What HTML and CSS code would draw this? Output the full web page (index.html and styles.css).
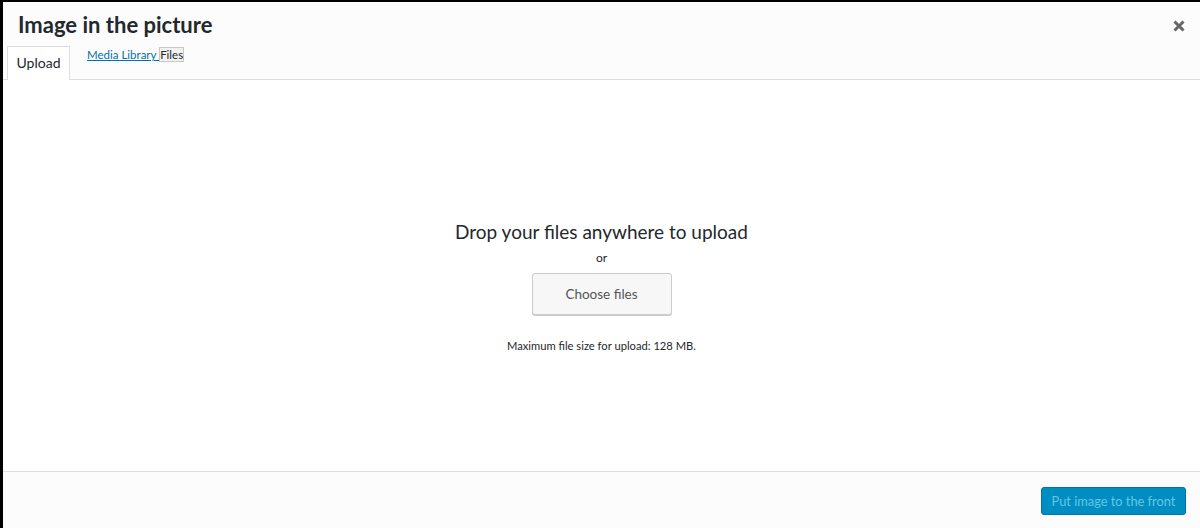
FILE: index.html
```html
<!DOCTYPE html>
<html lang="en">
<head>
<meta charset="utf-8">
<title>Image in the picture</title>
<link rel="stylesheet" href="styles.css">
</head>
<body>
<div class="modal">
  <header class="modal-header">
    <div class="title-row">
      <h1 class="title">Image in the picture</h1>
      <button class="close" aria-label="Close">
        <svg width="12" height="12" viewBox="0 0 12 12"><path d="M1.5 1.5 L10.5 10.5 M10.5 1.5 L1.5 10.5" stroke="#666" stroke-width="3" stroke-linecap="butt"/></svg>
      </button>
    </div>
    <nav class="tabs">
      <span class="tab active">Upload</span>
      <span class="tab-links"><a href="#" class="lib-link">Media Library&nbsp;</a><span class="files">Files</span></span>
    </nav>
  </header>
  <main class="content">
    <h2 class="drop-title">Drop your files anywhere to upload</h2>
    <p class="or">or</p>
    <button class="choose">Choose files</button>
    <p class="max">Maximum file size for upload: 128 MB.</p>
  </main>
  <footer class="modal-footer">
    <button class="primary">Put image to the front</button>
  </footer>
</div>
</body>
</html>
```
FILE: styles.css
```css
html, body {
  margin: 0;
  padding: 0;
  height: 100%;
  background: #000;
  overflow: hidden;
}
body {
  font-family: "Lato", "Open Sans", sans-serif;
  color: #23282d;
}
.modal {
  margin: 2px 0 0 3px;
  width: 1197px;
  height: 526px;
  display: flex;
  flex-direction: column;
  background: #fff;
}
.modal-header {
  background: #fcfcfc;
  border-bottom: 1px solid #dddddd;
  height: 77px;
  display: flex;
  flex-direction: column;
  justify-content: space-between;
}
.title-row {
  display: flex;
  align-items: center;
  justify-content: space-between;
  padding: 10px 14px 0 15px;
}
.title {
  margin: 0;
  font-size: 22px;
  font-weight: 700;
  line-height: 26px;
  color: #23282d;
}
.close {
  border: 0;
  background: none;
  padding: 0;
  width: 14px;
  height: 14px;
  display: flex;
  align-items: center;
  justify-content: center;
  margin-top: 2px;
}
.tabs {
  display: flex;
  align-items: flex-start;
  padding-left: 4px;
  height: 33px;
}
.tab {
  font-size: 14px;
}
.tab.active {
  box-sizing: border-box;
  height: 34px;
  width: 63px;
  border: 1px solid #dddddd;
  border-bottom: 0;
  background: #fff;
  display: flex;
  align-items: center;
  justify-content: center;
  color: #23282d;
  padding-bottom: 2px;
}
.tab-links {
  margin-left: 17px;
  font-size: 11.5px;
  display: flex;
  align-items: center;
  margin-top: 1px;
  height: 15px;
}
.lib-link {
  color: #0073aa;
  text-decoration: underline;
}
.files {
  border: 1px solid #c8c8c8;
  background: #f1f1f1;
  color: #23282d;
  padding: 0;
  line-height: 13px;
}
.content {
  flex: 1;
  display: flex;
  flex-direction: column;
  align-items: center;
  padding-top: 140px;
  box-sizing: border-box;
}
.drop-title {
  margin: 0;
  font-size: 19px;
  font-weight: 400;
  line-height: 24px;
  color: #23282d;
}
.or {
  margin: 8px 0 0;
  font-size: 12px;
  line-height: 12px;
  color: #23282d;
}
.choose {
  margin-top: 9px;
  box-sizing: border-box;
  width: 140px;
  height: 42px;
  background: #f7f7f7;
  border: 1px solid #cccccc;
  border-radius: 3px;
  box-shadow: 0 1px 0 #cccccc;
  font-family: inherit;
  font-size: 13.5px;
  color: #555;
}
.max {
  margin: 25px 0 0;
  font-size: 11.2px;
  line-height: 12px;
  color: #23282d;
}
.modal-footer {
  height: 57px;
  border-top: 1px solid #dddddd;
  background: #fcfcfc;
  display: flex;
  justify-content: flex-end;
  align-items: flex-start;
  padding: 15px 14px 0 0;
  box-sizing: border-box;
}
.primary {
  box-sizing: border-box;
  height: 28px;
  width: 145px;
  background: #008ec2;
  border: 1px solid #0073aa;
  border-radius: 3px;
  font-family: inherit;
  font-size: 12.8px;
  color: #66c6e4;
}
```
